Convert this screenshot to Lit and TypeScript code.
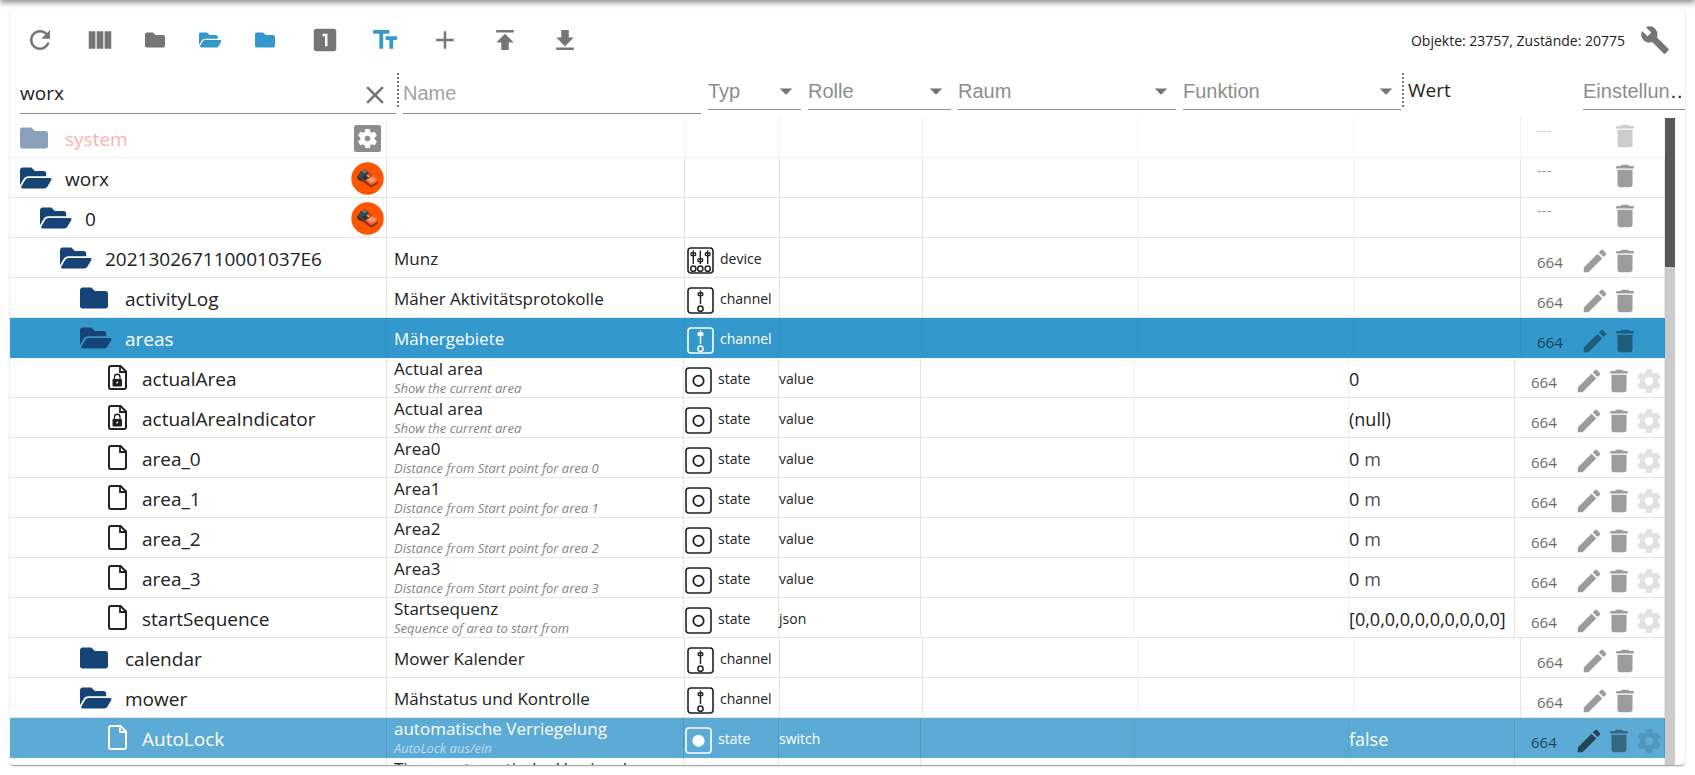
import { LitElement, html, svg, css, nothing } from "lit";
import { customElement, property } from "lit/decorators.js";
import { classMap } from "lit/directives/class-map.js";

const PATHS = {
  refresh: "M17.65 6.35C16.2 4.9 14.21 4 12 4c-4.42 0-7.99 3.58-7.99 8s3.57 8 7.99 8c3.73 0 6.84-2.55 7.73-6h-2.08c-.82 2.33-3.04 4-5.65 4-3.31 0-6-2.69-6-6s2.69-6 6-6c1.66 0 3.14.69 4.22 1.78L13 11h7V4l-2.35 2.35z",
  columns: "M14.67 5v14H9.33V5h5.34zm1 14H21V5h-5.33v14zm-7.34 0V5H3v14h5.33z",
  one: "M19 3H5c-1.1 0-2 .9-2 2v14c0 1.1.9 2 2 2h14c1.1 0 2-.9 2-2V5c0-1.1-.9-2-2-2zm-5 14h-2V9h-2V7h4v10z",
  text: "M2.5 4v3h5v12h3V7h5V4h-13zm19 5h-9v3h3v7h3v-7h3V9z",
  add: "M19 13h-6v6h-2v-6H5v-2h6V5h2v6h6v2z",
  upload: "M5 4v2h14V4H5zm0 10h4v6h6v-6h4l-7-7-7 7z",
  download: "M19 20v-2H5v2h14zm0-10h-4V4H9v6H5l7 7 7-7z",
  wrench: "M22.7 19l-9.1-9.1c.9-2.3.4-5-1.5-6.9-2-2-5-2.4-7.4-1.3L9 6 6 9 1.6 4.7C.4 7.1.9 10.1 2.9 12.1c1.9 1.9 4.6 2.4 6.9 1.5l9.1 9.1c.4.4 1 .4 1.4 0l2.3-2.3c.5-.4.5-1.1.1-1.4z",
  close: "M19 6.41L17.59 5 12 10.59 6.41 5 5 6.41 10.59 12 5 17.59 6.41 19 12 13.41 17.59 19 19 17.59 13.41 12z",
  arrow: "M7 10l5 5 5-5z",
  edit: "M3 17.25V21h3.75L17.81 9.94l-3.75-3.75L3 17.25zM20.71 7.04c.39-.39.39-1.02 0-1.41l-2.34-2.34c-.39-.39-1.02-.39-1.41 0l-1.83 1.83 3.75 3.75 1.83-1.83z",
  trash: "M6 19c0 1.1.9 2 2 2h8c1.1 0 2-.9 2-2V7H6v12zM19 4h-3.5l-1-1h-5l-1 1H5v2h14V4z",
  gear: "M19.14 12.94c.04-.3.06-.61.06-.94 0-.32-.02-.64-.07-.94l2.03-1.58c.18-.14.23-.41.12-.61l-1.92-3.32c-.12-.22-.37-.29-.59-.22l-2.39.96c-.5-.38-1.03-.7-1.62-.94l-.36-2.54c-.04-.24-.24-.41-.48-.41h-3.84c-.24 0-.43.17-.47.41l-.36 2.54c-.59.24-1.13.57-1.62.94l-2.39-.96c-.22-.08-.47 0-.59.22L2.74 8.87c-.12.21-.08.47.12.61l2.03 1.58c-.05.3-.09.63-.09.94s.02.64.07.94l-2.03 1.58c-.18.14-.23.41-.12.61l1.92 3.32c.12.22.37.29.59.22l2.39-.96c.5.38 1.03.7 1.62.94l.36 2.54c.05.24.24.41.48.41h3.84c.24 0 .44-.17.47-.41l.36-2.54c.59-.24 1.13-.56 1.62-.94l2.39.96c.22.08.47 0 .59-.22l1.92-3.32c.12-.22.07-.47-.12-.61l-2.01-1.58zM12 15.4c-1.88 0-3.4-1.52-3.4-3.4s1.52-3.4 3.4-3.4 3.4 1.52 3.4 3.4-1.52 3.4-3.4 3.4z",
};
type IconName = keyof typeof PATHS;

const FOLDER = "M464 128H272l-64-64H48C21.49 64 0 85.49 0 112v288c0 26.51 21.49 48 48 48h416c26.51 0 48-21.49 48-48V176c0-26.51-21.49-48-48-48z";
const FOLDER_OPEN = "M572.694 292.093L500.27 416.248A63.997 63.997 0 0 1 444.989 448H45.025c-18.523 0-30.064-20.093-20.731-36.093l72.424-124.155A64 64 0 0 1 152 256h399.964c18.523 0 30.064 20.093 20.73 36.093zM152 224h328v-48c0-26.51-21.49-48-48-48H272l-64-64H48C21.49 64 0 85.49 0 112v278.046l69.077-118.418C86.214 242.25 117.989 224 152 224z";

const icon = (name: IconName) => html`
  <svg class="icon" viewBox="0 0 24 24" width="30" height="30" aria-hidden="true"><path d=${PATHS[name]}></path></svg>`;

const folder = (open: boolean, size: number) => open
  ? html`<svg class="icon" viewBox="0 0 576 512" width=${size * 9 / 8} height=${size} aria-hidden="true"><path d=${FOLDER_OPEN}></path></svg>`
  : html`<svg class="icon" viewBox="0 0 512 512" width=${size} height=${size} aria-hidden="true"><path d=${FOLDER}></path></svg>`;

const file = (locked: boolean) => html`
  <svg class="line" viewBox="0 0 19 25" width="19" height="25" aria-hidden="true">
    <path d="M3 1h9.500l5.500 5.500V22a2 2 0 0 1-2 2H3a2 2 0 0 1-2-2V3a2 2 0 0 1 2-2z" stroke-width="2"></path>
    <path d="M12 1.500V7h5.500" stroke-width="1.800"></path>
    ${locked ? svg`
      <rect class="solid" x="4.500" y="14" width="9.500" height="7.500" rx="1"></rect>
      <path d="M6.500 14v-2a2.750 2.750 0 0 1 5.500 0v2" stroke-width="1.300"></path>
      <circle class="hole" cx="9.250" cy="17.500" r="1"></circle>` : nothing}
  </svg>`;

const mower = html`
  <svg class="badge" viewBox="0 0 33 33" width="33" height="33" aria-hidden="true">
    <circle cx="16.500" cy="16.500" r="16.200" fill="#ff5500"></circle>
    <path d="M10.500 19l8.500 6q1.500.700 3 0l4.500-3.200q1-1.200.500-3.300l-8-4z" fill="#9c3010"></path>
    <path d="M13.500 17.500l7.500-4.500 4.500 2.500q2 1.500 1.300 3.700l-4.800 3.300q-1.500.700-3 0z" fill="#f4622e"></path>
    <path d="M16 18l5-3.200 3.500 2q.8.800 0 1.600l-3 2q-1 .500-2 0z" fill="#ff9a72"></path>
    <path d="M6 14.500l2-2.500 1.500-3 4.500-1.500 2.500 1.500 4.500 4.500-5 4-3.500 1.500-5.500-3z" fill="#43464a"></path>
    <path d="M10 9.500l4-1.500 2.500 1.500-3.500 1.700z" fill="#77756f"></path>
    <path d="M6 14.500l3.500 1.500 2 3.500-4.500-1.800z" fill="#2b2d31"></path>
    <path d="M12.500 13.500l4 2.100-2 2.200-3.500-2z" fill="#2b2d31"></path>
    <path d="M17 10.300l4 2.700-1.200 2-2.300-1.300z" fill="#e23c22"></path>
    <path d="M16.500 12.800l2.500 1.200-1 1.200-2.300-1.200z" fill="#ffc83a"></path>
  </svg>`;

const gearBox = html`
  <svg class="badge" viewBox="0 0 33 33" width="33" height="33" aria-hidden="true">
    <rect x="3" y="3" width="27" height="27" rx="2.500" fill="#1c1c1c"></rect>
    <g transform="translate(4.500 4.500)" fill="#fff"><path d=${PATHS.gear}></path></g>
    <circle cx="16.500" cy="16.500" r="5" fill="#fff"></circle><circle cx="16.500" cy="16.500" r="2.800" fill="#1c1c1c"></circle>
  </svg>`;

const slider = (x: number, knob: number) => svg`
  <path d="M${x} 3.500V17" stroke-width="1.400"></path>
  <rect class="knob" x=${x - 2.3} y=${knob} width="4.600" height="2.600" rx=".5" stroke-width="1.300"></rect>
  <circle cx=${x} cy="21.700" r="2.600" stroke-width="1.500"></circle>`;

const KINDS: Record<string, unknown> = {
  device: svg`${slider(6.300, 6)}${slider(13.300, 12)}${slider(20.700, 6)}`,
  channel: svg`${slider(13.500, 6)}`,
  state: svg`<circle class="dot" cx="13.500" cy="13.800" r="5.200" stroke-width="1.800"></circle>`,
};

const kindIcon = (kind: string) => html`
  <svg class="line kind-icon" viewBox="0 0 27 27" width="27" height="27" aria-hidden="true">
    <rect x="1" y="1" width="25" height="25" rx="3" stroke-width="1.600"></rect>${KINDS[kind]}
  </svg>`;

interface Entry {
  id: string;
  level: number;
  shape: "folder" | "open" | "file" | "locked";
  badge?: "mower" | "system";
  name?: string;
  note?: string;
  kind?: "device" | "channel" | "state";
  role?: string;
  value?: string;
  unit?: string;
  mark?: "selected" | "hover" | "faded";
}

const area = (n: number): Entry => ({
  id: `area_${n}`, level: 4, shape: "file", name: `Area${n}`, note: `Distance from Start point for area ${n}`,
  kind: "state", role: "value", value: "0", unit: "m",
});

const ENTRIES: Entry[] = [
  { id: "system", level: 0, shape: "folder", badge: "system", mark: "faded" },
  { id: "worx", level: 0, shape: "open", badge: "mower" },
  { id: "0", level: 1, shape: "open", badge: "mower" },
  { id: "202130267110001037E6", level: 2, shape: "open", name: "Munz", kind: "device" },
  { id: "activityLog", level: 3, shape: "folder", name: "Mäher Aktivitätsprotokolle", kind: "channel" },
  { id: "areas", level: 3, shape: "open", name: "Mähergebiete", kind: "channel", mark: "selected" },
  { id: "actualArea", level: 4, shape: "locked", name: "Actual area", note: "Show the current area", kind: "state", role: "value", value: "0" },
  { id: "actualAreaIndicator", level: 4, shape: "locked", name: "Actual area", note: "Show the current area", kind: "state", role: "value", value: "(null)" },
  area(0), area(1), area(2), area(3),
  { id: "startSequence", level: 4, shape: "file", name: "Startsequenz", note: "Sequence of area to start from", kind: "state", role: "json", value: "[0,0,0,0,0,0,0,0,0,0]" },
  { id: "calendar", level: 3, shape: "folder", name: "Mower Kalender", kind: "channel" },
  { id: "mower", level: 3, shape: "open", name: "Mähstatus und Kontrolle", kind: "channel" },
  { id: "AutoLock", level: 4, shape: "file", name: "automatische Verriegelung", note: "AutoLock aus/ein", kind: "state", role: "switch", value: "false", mark: "hover" },
  { id: "AutoLockTimer", level: 4, shape: "file", name: "Timer automatische Verriegelung", kind: "state", note: "Timer AutoLock", role: "value", value: "0" },
];

const base = css`
  * { box-sizing: border-box; }
  svg { display: block; flex: none; }
  .icon { fill: currentColor; }
  button {
    display: flex; align-items: center; justify-content: center;
    flex: none; margin: 0; padding: 0; border: 0; background: none; color: inherit; cursor: pointer;
  }
`;

@customElement("object-toolbar")
class ObjectToolbar extends LitElement {
  static styles = [base, css`
    :host { display: flex; align-items: center; height: 60px; padding-right: 15px; color: #757575; }
    button { width: 60px; height: 60px; }
    .narrow { width: 50px; }
    .group-end { margin-right: 5px; }
    .active { color: #3399cc; }
    .stats { margin: 0 0 0 auto; padding-top: 2px; color: #212121; font-size: 14px; line-height: 20px; white-space: nowrap; }
    .tools { width: 30px; margin-left: 15px; }
  `];
  render() {
    return html`
      <button aria-label="Aktualisieren">${icon("refresh")}</button>
      <button aria-label="Spalten">${icon("columns")}</button>
      <button class="narrow" aria-label="Alle zuklappen">${folder(false, 20)}</button>
      <button class="active" aria-label="Alle aufklappen">${folder(true, 20)}</button>
      <button class="narrow active group-end" aria-label="Ordner">${folder(false, 20)}</button>
      <button aria-label="Ebene">${icon("one")}</button>
      <button class="active" aria-label="Namen">${icon("text")}</button>
      <button aria-label="Hinzufügen">${icon("add")}</button>
      <button aria-label="Hochladen">${icon("upload")}</button>
      <button aria-label="Herunterladen">${icon("download")}</button>
      <p class="stats">Objekte: 23757, Zustände: 20775</p>
      <button class="tools" aria-label="Werkzeuge">${icon("wrench")}</button>
    `;
  }
}

@customElement("filter-bar")
class FilterBar extends LitElement {
  static styles = [base, css`
    :host {
      display: grid; column-gap: 7px; height: 48px; padding-left: 10px; overflow: hidden;
      grid-template-columns: minmax(0, 376fr) minmax(0, 298fr) minmax(0, 93fr) minmax(0, 143fr) minmax(0, 218fr) minmax(0, 218fr) minmax(0, 168fr) 102px;
    }
    .field { display: flex; align-items: center; border-bottom: 1px solid #8c8c8c; color: #757575; }
    .low { height: 44px; padding-top: 2px; }
    .high { height: 40px; padding-top: 2px; }
    input, select {
      flex: 1; min-width: 0; width: 100%; height: 30px; margin: 0; padding: 0; border: 0; outline: 0;
      background: none; color: #212121; font-family: inherit; font-size: 19px;
    }
    input::placeholder { color: #a2a2a2; opacity: 1; font-family: "Liberation Sans", Arial, sans-serif; font-size: 20px; }
    select { appearance: none; color: #8c8c8c; font-family: "Liberation Sans", Arial, sans-serif; font-size: 20px; grid-area: 1 / 1; }
    .pick { display: grid; grid-template-columns: minmax(0, 1fr); }
    .pick svg { grid-area: 1 / 1; justify-self: end; pointer-events: none; }
    .clear { width: 30px; height: 30px; margin: 4px 6px 0 0; }
    .with-handle { display: flex; }
    .with-handle .field { flex: 1; min-width: 0; }
    .handle { flex: none; width: 2px; height: 34px; margin: 3px -3px 0 1px; border-left: 2px dotted #757575; }
    .value-head { display: flex; align-items: center; height: 40px; color: #212121; font-size: 19px; }
    .cut {
      height: 40px; margin-right: -8px; border-bottom: 1px solid #8c8c8c; line-height: 42px;
      color: #212121; font-family: "Liberation Sans", Arial, sans-serif; font-size: 20px;
      overflow: hidden; white-space: nowrap; text-overflow: ellipsis;
    }
    .cut span { color: #8c8c8c; }
  `];
  private pick(label: string) {
    return html`<div class="field high pick"><select aria-label=${label}><option>${label}</option></select>${icon("arrow")}</div>`;
  }
  render() {
    return html`
      <div class="with-handle">
        <div class="field low"><input aria-label="ID" value="worx"><button class="clear" aria-label="Leeren">${icon("close")}</button></div>
        <span class="handle"></span>
      </div>
      <div class="field low"><input aria-label="Name" placeholder="Name"></div>
      ${this.pick("Typ")}
      ${this.pick("Rolle")}
      ${this.pick("Raum")}
      <div class="with-handle">${this.pick("Funktion")}<span class="handle"></span></div>
      <div class="value-head">Wert</div>
      <div class="cut"><span>Einstellungen</span></div>
    `;
  }
}

@customElement("object-tree")
class ObjectTree extends LitElement {
  @property({ attribute: false }) entries: Entry[] = [];

  static styles = [base, css`
    :host { display: flex; flex: 1; min-height: 0; padding-right: 10px; }
    .view { flex: 1; min-width: 0; overflow: hidden; }
    table, tbody { display: block; }
    tr {
      display: grid; height: 40px; border-bottom: 1px solid rgba(0, 0, 0, 0.1); color: #212121;
      grid-template-columns: minmax(0, 377fr) minmax(0, 298fr) minmax(0, 95fr) minmax(0, 143fr) minmax(0, 215fr) minmax(0, 216fr) minmax(0, 167fr) 144px;
    }
    .leaf { grid-template-columns: minmax(0, 377fr) minmax(0, 297fr) minmax(0, 95fr) minmax(0, 142fr) minmax(0, 214fr) minmax(0, 214fr) minmax(0, 166fr) 150px; }
    td { display: flex; align-items: center; min-width: 0; padding: 2px 0 0; border-right: 1px solid rgba(0, 0, 0, 0.1); white-space: nowrap; }
    .faint { border-right-color: rgba(0, 0, 0, 0.05); }
    .id { padding: 0 0 0 10px; font-size: 19px; }
    .id-icon { display: flex; width: 45px; flex: none; color: #164477; }
    .leaf .id-icon { width: 42px; padding-left: 8px; color: #212121; }
    .label { flex: 1; padding-top: 2px; line-height: 26px; }
    .branch .id-icon { height: 32px; align-items: center; }
    .badge { margin: 1px 2px 0 0; }
    .name { flex-direction: column; align-items: stretch; justify-content: center; padding-left: 7px; font-size: 17px; line-height: 20px; }
    .leaf .name { padding-top: 1px; }
    .note { color: #000; opacity: 0.5; font-size: 13px; line-height: 18px; font-style: italic; }
    .kind { gap: 6px; padding-left: 2px; font-size: 14px; line-height: 20px; }
    .leaf .kind { padding-left: 1px; }
    .role { font-size: 14px; }
    .value { gap: 5px; font-size: 18px; }
    .unit { opacity: 0.8; }
    .actions { padding-top: 0; }
    .rights { width: 59px; padding: 9px 0 0 16px; font-size: 15px; color: #000; opacity: 0.6; }
    .short { padding: 0 0 0 16px; opacity: 0.4; height: 36px; line-height: 20px; }
    .actions button { width: 30px; height: 30px; color: #000; opacity: 0.385; margin-top: 6px; }
    .root .actions button { margin: 0 0 4px 30px; }
    .actions .custom { opacity: 0.11; }
    .line { fill: none; stroke: currentColor; }
    .solid { fill: currentColor; stroke: none; }
    .hole { fill: #fff; stroke: none; }
    .kind-icon { margin-top: 4px; }
    .faded { opacity: 0.5; }
    .faded .label { color: #ff6666; }
    .selected, .hover { color: #fff; border-bottom-color: transparent; }
    .selected { background: #3399cc; }
    .selected td { border-right-color: rgba(0, 0, 0, 0.05); }
    .hover { background: #5babd6; }
    .selected .knob, .hover .dot { fill: currentColor; }
    .hover .id-icon { color: #fff; }
    .hover .note { color: #fff; opacity: 0.6; }
    .actions .edit { margin-left: 0; }
    .hover .actions .edit { opacity: 0.6; }
    .rail { flex: none; width: 10px; background: #cbcbcb; }
    .thumb { height: 23%; background: #575757; }
  `];

  private row(e: Entry) {
    const leaf = e.kind === "state";
    const isFile = e.shape === "file" || e.shape === "locked";
    const root = !e.kind;
    const classes = { leaf, branch: !leaf, root, [e.mark ?? "plain"]: true };
    return html`
      <tr class=${classMap(classes)}>
        <td class="id">
          <span style="width:${e.level * 20}px"></span>
          <span class="id-icon">${isFile ? file(e.shape === "locked") : folder(e.shape === "open", 28)}</span>
          <span class="label">${e.id}</span>
          ${e.badge === "mower" ? mower : e.badge === "system" ? gearBox : nothing}
        </td>
        <td class="name">${e.name ? html`<span>${e.name}</span>` : nothing}${e.note ? html`<span class="note">${e.note}</span>` : nothing}</td>
        <td class="kind">${e.kind ? html`${kindIcon(e.kind)}<span>${e.kind}</span>` : nothing}</td>
        <td class="role">${e.role ?? nothing}</td>
        <td class="faint"></td>
        <td class="faint"></td>
        <td class="value">${e.value ? html`<span>${e.value}</span>` : nothing}${e.unit ? html`<span class="unit">${e.unit}</span>` : nothing}</td>
        <td class="actions">
          <span class=${classMap({ rights: true, short: root })}>${root ? "---" : "664"}</span>
          ${root ? nothing : html`<button class="edit" aria-label="Bearbeiten">${icon("edit")}</button>`}
          <button aria-label="Löschen">${icon("trash")}</button>
          ${leaf ? html`<button class="custom" aria-label="Einstellungen">${icon("gear")}</button>` : nothing}
        </td>
      </tr>`;
  }

  render() {
    return html`
      <div class="view"><table><tbody>${this.entries.map((e) => this.row(e))}</tbody></table></div>
      <div class="rail"><div class="thumb"></div></div>
    `;
  }
}

@customElement("app-root")
class AppRoot extends LitElement {
  static styles = css`
    :host {
      display: flex; flex-direction: column; box-sizing: border-box; height: 100vh; padding: 0 10px 10px;
      overflow: hidden; background: #fff; font-family: "Open Sans", "Noto Sans", sans-serif;
    }
    .bar {
      flex: none; height: 10px; margin: -10px -10px 10px; background: #fff;
      box-shadow: 0 2px 4px -1px rgba(0, 0, 0, 0.25), 0 4px 5px 0 rgba(0, 0, 0, 0.18), 0 1px 10px 0 rgba(0, 0, 0, 0.16);
    }
    .card {
      display: flex; flex-direction: column; flex: 1; min-height: 0; overflow: hidden; border-radius: 4px; background: #fff;
      box-shadow: 0 2px 1px -1px rgba(0, 0, 0, 0.2), 0 1px 1px 0 rgba(0, 0, 0, 0.14), 0 1px 3px 0 rgba(0, 0, 0, 0.12);
    }
  `;
  render() {
    return html`
      <div class="bar"></div>
      <main class="card">
        <object-toolbar></object-toolbar>
        <filter-bar></filter-bar>
        <object-tree .entries=${ENTRIES}></object-tree>
      </main>
    `;
  }
}
